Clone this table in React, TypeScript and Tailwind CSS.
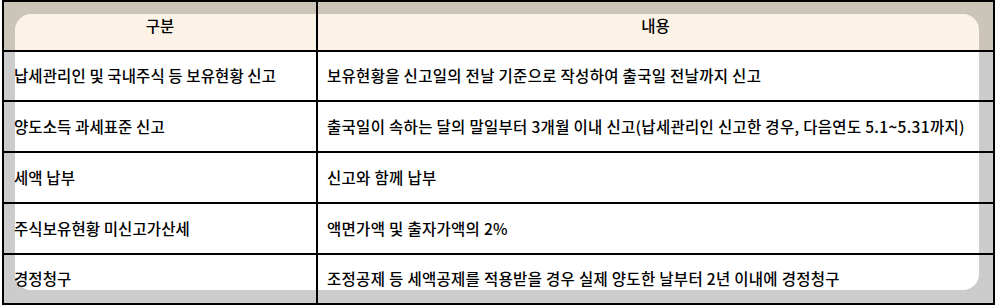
const rows = [
  {
    label: "납세관리인 및 국내주식 등 보유현황 신고",
    content: "보유현황을 신고일의 전날 기준으로 작성하여 출국일 전날까지 신고",
  },
  {
    label: "양도소득 과세표준 신고",
    content: "출국일이 속하는 달의 말일부터 3개월 이내 신고(납세관리인 신고한 경우, 다음연도 5.1~5.31까지)",
  },
  { label: "세액 납부", content: "신고와 함께 납부" },
  { label: "주식보유현황 미신고가산세", content: "액면가액 및 출자가액의 2%" },
  {
    label: "경정청구",
    content: "조정공제 등 세액공제를 적용받을 경우 실제 양도한 날부터 2년 이내에 경정청구",
  },
];

export default function App() {
  return (
    <div
      className="h-[306px] w-[995px] bg-white pl-[2px] text-[15.5px] font-medium text-black"
      style={{ fontFamily: '"Noto Sans CJK KR", "Noto Sans", sans-serif' }}
    >
      <div className="grid h-[305px] w-[993px]">
        {/* backdrop: outer frame + rounded inner panel */}
        <div className="col-start-1 row-start-1 bg-[linear-gradient(#cbc4b9_0_51px,#cccccc_51px)] pb-[15px] pl-[13px] pr-[16px] pt-[14px]">
          <div className="h-full rounded-[16px] bg-[linear-gradient(#fcf3e6_0_37px,#ffffff_37px)]" />
        </div>

        {/* table */}
        <div className="col-start-1 row-start-1 grid grid-cols-[314px_1fr] grid-rows-[50px_50px_51px_51px_51px_48px] border-2 border-black">
          <div className="flex items-center justify-center border-b-2 border-r-2 border-black">구분</div>
          <div className="flex items-center justify-center border-b-2 border-black">내용</div>
          {rows.map((r, i) => (
            <div key={i} className="contents">
              <div
                className={`flex items-center border-r-2 border-black pl-[10px] tracking-[0.1px] ${
                  i < rows.length - 1 ? "border-b-2" : ""
                }`}
              >
                {r.label}
              </div>
              <div
                className={`flex items-center border-black pl-[9px] tracking-[0.3px] ${
                  i < rows.length - 1 ? "border-b-2" : ""
                }`}
              >
                {r.content}
              </div>
            </div>
          ))}
        </div>
      </div>
    </div>
  );
}
